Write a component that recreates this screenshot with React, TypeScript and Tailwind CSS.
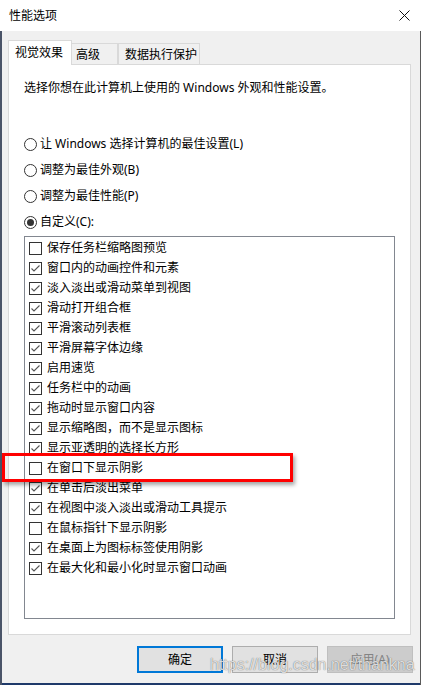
import React from 'react';

const effects = [
  { label: '保存任务栏缩略图预览', checked: false },
  { label: '窗口内的动画控件和元素', checked: true },
  { label: '淡入淡出或滑动菜单到视图', checked: true },
  { label: '滑动打开组合框', checked: true },
  { label: '平滑滚动列表框', checked: true },
  { label: '平滑屏幕字体边缘', checked: true },
  { label: '启用速览', checked: true },
  { label: '任务栏中的动画', checked: true },
  { label: '拖动时显示窗口内容', checked: true },
  { label: '显示缩略图，而不是显示图标', checked: true },
  { label: '显示亚透明的选择长方形', checked: true },
  { label: '在窗口下显示阴影', checked: false },
  { label: '在单击后淡出菜单', checked: true },
  { label: '在视图中淡入淡出或滑动工具提示', checked: true },
  { label: '在鼠标指针下显示阴影', checked: false },
  { label: '在桌面上为图标标签使用阴影', checked: true },
  { label: '在最大化和最小化时显示窗口动画', checked: true },
];

const radios = [
  { label: '让 Windows 选择计算机的最佳设置(L)', on: false },
  { label: '调整为最佳外观(B)', on: false },
  { label: '调整为最佳性能(P)', on: false },
  { label: '自定义(C):', on: true },
];

const CheckBox: React.FC<{ checked: boolean }> = ({ checked }) => (
  <div className="w-[13px] h-[13px] border border-[#333333] bg-white shrink-0 flex items-center justify-center">
    {checked && (
      <svg width="11" height="11" viewBox="0 0 11 11">
        <path d="M1.5 5.5 L4 8 L9.5 2.5" fill="none" stroke="#555555" strokeWidth="1.1" />
      </svg>
    )}
  </div>
);

const Radio: React.FC<{ on: boolean }> = ({ on }) => (
  <div className="w-[13px] h-[13px] rounded-full border border-[#333333] bg-white shrink-0 flex items-center justify-center">
    {on && <div className="w-[7px] h-[7px] rounded-full bg-[#333333]" />}
  </div>
);

export default function App() {
  return (
    <div className="w-[421px] h-[685px] bg-[#f0f0f0] relative flex flex-col overflow-hidden text-[12px] leading-[16px] text-black font-['Noto_Sans','Noto_Sans_CJK_SC',sans-serif]">
      {/* title bar */}
      <div className="h-[31px] bg-white flex items-center justify-between pl-[9px] pr-[11px] shrink-0">
        <span>性能选项</span>
        <svg width="11" height="11" viewBox="0 0 11 11">
          <path d="M0.5 0.5 L10.5 10.5 M10.5 0.5 L0.5 10.5" stroke="#111111" strokeWidth="1" />
        </svg>
      </div>

      <div className="flex-1 flex flex-col border-l-2 border-[#4a5468] border-r border-r-[#5a5a5a]">
        <div className="flex-1 flex flex-col pl-[6px] pr-[9px] pt-[9px]">
          {/* tabs */}
          <div className="flex items-end h-[25px] relative z-10">
            <div className="w-[64px] h-[25px] bg-white border border-[#d9d9d9] border-b-0 flex items-center pl-[6px]">
              视觉效果
            </div>
            <div className="w-[46px] h-[22px] border border-l-0 border-[#d9d9d9] border-b-0 flex items-center pl-[4px]">
              高级
            </div>
            <div className="w-[82px] h-[22px] border border-[#d9d9d9] border-b-0 flex items-center pl-[6px]">
              数据执行保护
            </div>
          </div>

          {/* panel */}
          <div className="h-[571px] -mt-[1px] bg-white border border-[#d9d9d9] flex flex-col px-[15px]">
            <p className="mt-[15px]">选择你想在此计算机上使用的 Windows 外观和性能设置。</p>

            <div className="mt-[35px] flex flex-col">
              {radios.map((r) => (
                <div key={r.label} className="h-[26px] flex items-center gap-[3px]">
                  <Radio on={r.on} />
                  <span>{r.label}</span>
                </div>
              ))}
            </div>

            <div className="mt-[1px] h-[383px] border border-[#828790] pt-[1px] pl-[4px] flex flex-col">
              {effects.map((e) => (
                <div key={e.label} className="h-[20px] flex items-center gap-[5px] shrink-0">
                  <CheckBox checked={e.checked} />
                  <span>{e.label}</span>
                </div>
              ))}
            </div>
          </div>

          {/* buttons */}
          <div className="flex justify-end gap-[9px] mt-[11px] -mr-[2px]">
            <button className="w-[86px] h-[27px] bg-[#e1e1e1] border-2 border-[#0078d7]">确定</button>
            <button className="w-[86px] h-[27px] bg-[#e1e1e1] border border-[#adadad]">取消</button>
            <button className="w-[86px] h-[27px] bg-[#cccccc] border border-[#bfbfbf] text-[#838383]">应用(A)</button>
          </div>
        </div>
        <div className="h-[2px] bg-[#1f3a6a] shrink-0" />
      </div>

      {/* red highlight */}
      <div className="absolute left-[2px] top-[453px] w-[291px] h-[29px] border-[3px] border-[#ff0000] shadow-[2px_3px_4px_rgba(0,0,0,0.35)]" />

      {/* watermark */}
      <div className="absolute left-[210px] top-[656px] text-[16px] leading-[18px] font-['Liberation_Sans',Arial,sans-serif] text-white/80 [text-shadow:0_0_1px_rgba(0,0,0,0.7)] pointer-events-none">
        https://blog.csdn.net/thankna
      </div>
    </div>
  );
}
